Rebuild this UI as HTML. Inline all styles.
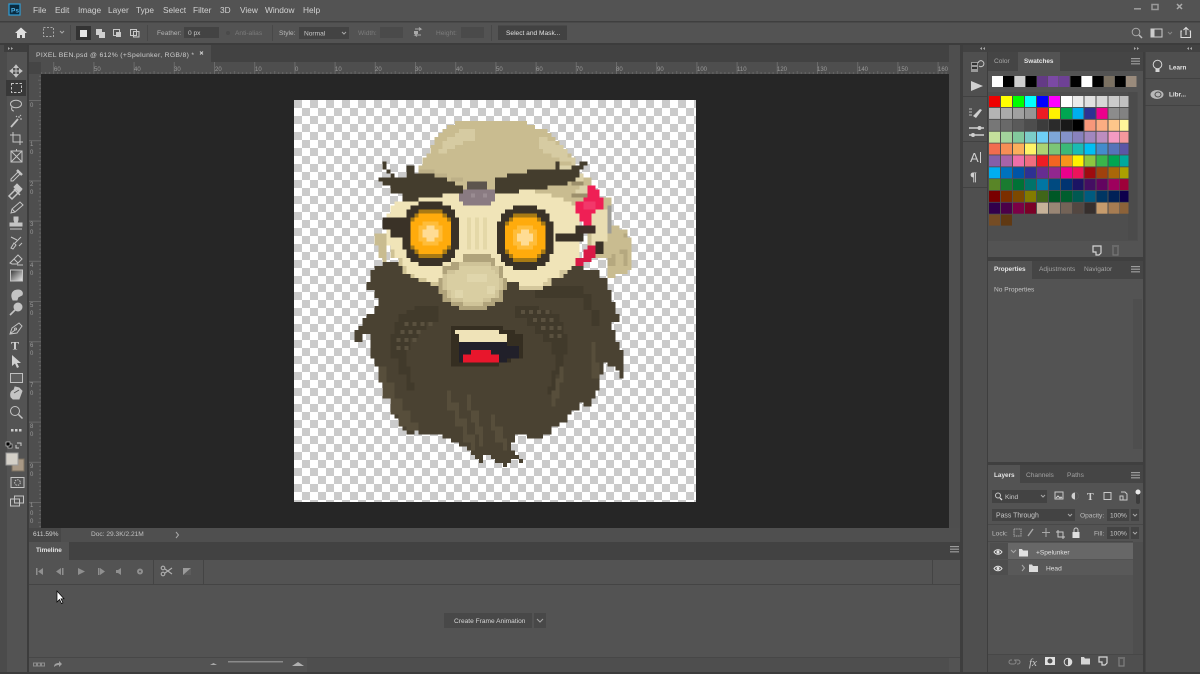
<!DOCTYPE html>
<html lang="en"><head><meta charset="utf-8"><title>Photoshop</title>
<style>html,body{margin:0;padding:0;background:#535353;width:1200px;height:674px;overflow:hidden}svg{display:block}text{font-family:"Liberation Sans",sans-serif;font-size:6.6px;fill:#c8c8c8}.m text{font-size:8.300px;fill:#d2d2d2}.d text{fill:#7c7c7c}.r text{font-size:6px;fill:#9a9a9a}.w{fill:#e4e4e4;font-weight:bold;font-size:6.400px}.i{fill:#c8c8c8}.s{fill:none;stroke:#c8c8c8;stroke-width:1}.g{fill:none;stroke:#a8a8a8;stroke-width:1}</style></head><body>
<svg width="1200" height="674" viewBox="0 0 1200 674" xmlns="http://www.w3.org/2000/svg">
<defs>
<pattern id="ck" width="16" height="16" patternUnits="userSpaceOnUse" x="294" y="100"><rect width="16" height="16" fill="#fff"/><rect width="8" height="8" fill="#cbcbcb"/><rect x="8" y="8" width="8" height="8" fill="#cbcbcb"/></pattern>
<pattern id="tx" width="40.2" height="12" patternUnits="userSpaceOnUse" x="13" y="62"><rect x="0" y="0" width="1" height="12" fill="#6a6a6a"/><rect x="4" y="10" width="1" height="2" fill="#666"/><rect x="8" y="10" width="1" height="2" fill="#666"/><rect x="12" y="10" width="1" height="2" fill="#666"/><rect x="16" y="10" width="1" height="2" fill="#666"/><rect x="20" y="9" width="1" height="3" fill="#666"/><rect x="24" y="10" width="1" height="2" fill="#666"/><rect x="28" y="10" width="1" height="2" fill="#666"/><rect x="32" y="10" width="1" height="2" fill="#666"/><rect x="36" y="10" width="1" height="2" fill="#666"/></pattern>
<pattern id="ty" width="12" height="40.2" patternUnits="userSpaceOnUse" x="29" y="100"><rect width="12" height="1" fill="#6a6a6a"/><rect x="10" y="4" width="2" height="1" fill="#666"/><rect x="10" y="8" width="2" height="1" fill="#666"/><rect x="10" y="12" width="2" height="1" fill="#666"/><rect x="10" y="16" width="2" height="1" fill="#666"/><rect x="9" y="20" width="3" height="1" fill="#666"/><rect x="10" y="24" width="2" height="1" fill="#666"/><rect x="10" y="28" width="2" height="1" fill="#666"/><rect x="10" y="32" width="2" height="1" fill="#666"/><rect x="10" y="36" width="2" height="1" fill="#666"/></pattern>
<linearGradient id="gr" x1="0" x2="1" y1="0" y2="1"><stop offset="0" stop-color="#333"/><stop offset="1" stop-color="#eee"/></linearGradient>
<g id="hb"><rect x="0" y="0" width="9" height="1.2" fill="#c0c0c0"/><rect x="0" y="2.6" width="9" height="1.2" fill="#c0c0c0"/><rect x="0" y="5.2" width="9" height="1.2" fill="#c0c0c0"/></g>
</defs>

<rect width="1200" height="674" fill="#535353"/>
<!-- menu -->
<rect x="0" y="21" width="1200" height="1.5" fill="#3f3f3f"/>
<rect x="0" y="43" width="1200" height="2" fill="#3c3c3c"/>
<rect x="9" y="4" width="11" height="11" fill="#0a2b40" stroke="#2f9fd8" stroke-width="1.2"/>
<text x="11" y="12.500" style="font-size:6.500px;font-weight:bold;fill:#4fb5ec">Ps</text>
<g class="m"><text x="33" y="13">File</text><text x="55" y="13">Edit</text><text x="78" y="13">Image</text><text x="108" y="13">Layer</text><text x="136" y="13">Type</text><text x="163" y="13">Select</text><text x="193" y="13">Filter</text><text x="220" y="13">3D</text><text x="240" y="13">View</text><text x="265" y="13">Window</text><text x="303" y="13">Help</text></g>
<rect x="1134" y="8" width="7" height="1.600" fill="#999"/><rect x="1152" y="4.500" width="6" height="5" fill="none" stroke="#999" stroke-width="1.500"/><path d="M1177 4l5 5M1182 4l-5 5" stroke="#aaa" stroke-width="1.500"/>

<!-- options bar -->
<path d="M15 33l6-5.500 6 5.500h-2v5h-3v-3h-2v3h-3v-5z" fill="#e0e0e0"/>
<rect x="43.500" y="27.500" width="10" height="9" class="g" stroke-dasharray="2 1.500"/>
<path d="M60 31l2 2 2-2" class="g"/>
<rect x="70" y="25" width="1" height="16" fill="#484848"/>
<rect x="76" y="26" width="15" height="14" fill="#333"/>
<rect x="80" y="30" width="7" height="7" fill="#e6e6e6"/>
<path d="M96 29h6v3h3v6h-6v-3h-3z" fill="#d0d0d0"/>
<rect x="113.500" y="29.500" width="6" height="6" class="s" /><rect x="116" y="32" width="5" height="5" class="i"/>
<rect x="130.500" y="29.500" width="6" height="6" class="s"/><rect x="133.500" y="31.500" width="5.500" height="5.500" class="s"/>
<rect x="147" y="25" width="1" height="16" fill="#484848"/>
<text x="157" y="35" style="fill:#b4b4b4">Feather:</text>
<rect x="184" y="27" width="35" height="11" fill="#434343"/><text x="188" y="35">0 px</text>
<circle cx="228" cy="33" r="2" fill="#4a4a4a"/><g class="d"><text x="235" y="35">Anti-alias</text></g>
<rect x="272" y="25" width="1" height="16" fill="#484848"/>
<text x="279" y="35" style="fill:#bbb">Style:</text>
<rect x="299" y="27" width="50" height="12" fill="#434343"/><text x="304" y="35.500">Normal</text><path d="M342 32l2 2 2-2" class="g"/>
<g class="d"><text x="358" y="35">Width:</text><text x="436" y="35">Height:</text></g>
<rect x="380" y="27" width="23" height="11" fill="#4a4a4a"/><rect x="461" y="27" width="23" height="11" fill="#4a4a4a"/>
<path d="M415 29h6l-2-1.500M421 29l-2 1.500M421 35h-6l2-1.500M415 35l2 1.500" stroke="#aaa" fill="none"/><rect x="414" y="31" width="4" height="3" fill="#aaa"/>
<rect x="491" y="25" width="1" height="16" fill="#484848"/>
<rect x="498" y="25.500" width="69" height="14.500" fill="#424242"/><text x="506" y="35" style="fill:#e0e0e0">Select and Mask...</text>
<circle cx="1136" cy="32" r="3.800" class="g" stroke-width="1.300"/><path d="M1139 35l3 3" stroke="#bbb" stroke-width="1.500"/>
<rect x="1151" y="29" width="11" height="8" fill="none" stroke="#ccc"/><rect x="1151" y="29" width="3.500" height="8" fill="#ccc"/>
<path d="M1168 32l2 2 2-2" stroke="#888" fill="none"/>
<path d="M1182 31h-1v6.500h9.500V31h-1M1186 35v-7M1183.500 30l2.500-2.500 2.500 2.500" fill="none" stroke="#ddd" stroke-width="1.100"/>

<!-- left dock -->
<rect x="0" y="45" width="7" height="629" fill="#4b4b4b"/>
<rect x="4" y="45" width="24" height="7" fill="#3e3e3e"/>
<path d="M8 47l2 1.500-2 1.500zM11 47l2 1.500-2 1.500z" fill="#aaa"/>
<rect x="27" y="45" width="2" height="629" fill="#3c3c3c"/>

<!-- tab bar -->
<rect x="29" y="45" width="931" height="17" fill="#424242"/>
<rect x="29" y="45" width="182" height="17" fill="#4e4e4e"/>
<text x="36" y="57" textLength="158" style="fill:#cfcfcf;font-size:6.800px">PIXEL BEN.psd @ 612% (+Spelunker, RGB/8) *</text>
<path d="M200 51.500l3 3M203 51.500l-3 3" stroke="#ccc"/>

<!-- rulers -->
<rect x="29" y="62" width="920" height="12" fill="#4e4e4e"/><rect x="41" y="62" width="908" height="12" fill="url(#tx)"/>
<rect x="29" y="62" width="12" height="466" fill="#4e4e4e"/><rect x="29" y="74" width="12" height="454" fill="url(#ty)"/>
<rect x="29" y="62" width="12" height="12" fill="#454545"/>
<g class="r"><text x="54" y="71">60</text><text x="94" y="71">50</text><text x="134" y="71">40</text><text x="174" y="71">30</text><text x="215" y="71">20</text><text x="255" y="71">10</text><text x="295" y="71">0</text><text x="335" y="71">10</text><text x="375" y="71">20</text><text x="415" y="71">30</text><text x="456" y="71">40</text><text x="496" y="71">50</text><text x="536" y="71">60</text><text x="576" y="71">70</text><text x="616" y="71">80</text><text x="657" y="71">90</text><text x="697" y="71">100</text><text x="737" y="71">110</text><text x="777" y="71">120</text><text x="817" y="71">130</text><text x="858" y="71">140</text><text x="898" y="71">150</text><text x="938" y="71">160</text>
<text x="30" y="107">0</text><text x="30" y="146">1</text><text x="30" y="154">0</text><text x="30" y="186">2</text><text x="30" y="194">0</text><text x="30" y="226">3</text><text x="30" y="234">0</text><text x="30" y="267">4</text><text x="30" y="275">0</text><text x="30" y="307">5</text><text x="30" y="315">0</text><text x="30" y="347">6</text><text x="30" y="355">0</text><text x="30" y="387">7</text><text x="30" y="395">0</text><text x="30" y="428">8</text><text x="30" y="436">0</text><text x="30" y="468">9</text><text x="30" y="476">0</text><text x="30" y="507">1</text><text x="30" y="515">0</text><text x="30" y="523">0</text></g>

<!-- canvas -->
<rect x="41" y="74" width="908" height="454" fill="#262626"/>
<rect x="294" y="100" width="402" height="402" fill="url(#ck)"/>

<!-- pixel art -->
<g transform="translate(294 101) scale(4.02)" shape-rendering="crispEdges">
<!-- ears/back -->
<path d="M78 31H81V32H83V34H84V42H83V43H80V44H78Z" fill="#c9bc90"/><path d="M82 33h1v1h-1zM81 37h2v4h-1v-3h-1zM78 38h2v3h-2z" fill="#b5a87f"/>
<path d="M20 33H23V40H22V39H21V36H20Z" fill="#c9bc90"/>
<rect x="73" y="24" width="6" height="15" fill="#c9bc90"/><path d="M78 26h1v7h-1z" fill="#9e9d96"/><path d="M74 27h4v8h-2v2h-2z" fill="#e9ddb2"/>
<!-- beard -->
<path d="M22 40H72V42H76V44H78V47H79V50H80V53H81V55H79V57H80V60H81V62H82V69H81V67H80V66H78V65H77V68H76V72H75V74H74V76H72V75H71V77H69V78H68V80H66V81H64V83H62V84H58V83H55V85H54V87H55V88H56V89H57V90H56V89H54V90H53V91H52V90H50V89H49V88H47V90H46V89H45V88H44V87H43V86H41V85H39V84H37V83H31V82H30V83H28V82H27V81H26V79H25V77H24V74H23V72H22V69H21V66H20V64H19V58H17V60H15V57H16V56H17V54H18V53H20V51H21V49H20V47H18V45H19V42H20V41H22Z" fill="#4a4232"/>
<!-- moustache shading -->
<path d="M36 51H30V52H28V53H26V55H25V58H24V64H26V68H28V72H30V70H29V66H28V62H29V59H31V57H33V55H36V53Z" fill="#413a2b"/>
<path d="M55 51H61V52H64V53H66V55H67V58H68V63H67V68H65V73H63V71H64V67H65V63H64V60H62V58H60V56H58V54H55Z" fill="#413a2b"/>
<path d="M60 46H72V48H74V52H76V56H74V52H72V49H60Z" fill="#413a2b"/>
<g fill="none" stroke="#5a513f" stroke-width="1" stroke-dasharray="1 1">
<path d="M27.500 55.500H35.500M26.500 57.500H32.500M25.500 59.500H30.500M25.500 61.500H28.500"/>
<path d="M56.500 52.500H63.500M59.500 54.500H65.500M61.500 56.500H66.500M63.500 58.500H67.500"/>
</g>
<g fill="#574e3b">
<path d="M21 66H23V70H25V74H27V77H29V80H31V82H28V81H26V78H24V74H22V70H21Z"/>
<path d="M38 72H39V75H41V79H43V83H45V87H44V85H42V81H40V77H38Z"/>
<path d="M43 73H44V77H46V81H47V86H46V83H45V80H44V77H43Z"/>
<path d="M49 78H50V81H52V84H53V87H52V85H50V82H49Z"/>
<path d="M66 66H67V70H66V74H65V76H64V72H65V69H66Z"/>
<path d="M74 60H75V65H76V69H74V64H74Z"/>
</g>
<!-- skull -->
<path d="M44 5H58V6H60V7H63V8H64V9H65V10H66V11H67V12H68V13H69V14H70V16H71V18H72V19H74V22H75V25H73V26H30V18H31V16H32V14H33V13H34V11H35V9H36V8H37V7H38V6H40V5Z" fill="#c9bc90"/>
<path d="M41 7H45V10H42V11H40V12H38V13H36V12H37V10H38V9H40V8H41Z" fill="#d6cba2"/>
<path d="M61 9H63V10H65V11H67V12H68V14H70V16H69V15H66V14H64V13H62V12H61Z" fill="#d6cba2"/>
<path d="M31 17H35V18H38V19H42V20H45V22H43V20H39V19H33V18H31Z" fill="#bdb087"/>
<path d="M66 16h5v2h1v3h-3v-1h-1v-2h-2zM71 21h2v2h-3v-1h1z" fill="#dcd2aa"/>
<path d="M69 20h3v1h-3zM69 23h4v1h-4z" fill="#9c8f6b"/>
<!-- face -->
<path d="M38 22H41V25H50V22H60V23H64V24H67V25H69V26H70V28H71V40H70V41H69V42H67V44H64V46H62V47H56V45H36V46H34V45H31V44H29V43H27V41H26V39H24V36H23V28H24V26H25V25H27V24H30V23H33V22Z" fill="#f0e4b8"/>
<path d="M23 36h1v3h2v2h1v2h2v1h2v1h3v1h2v-1h-3v-1h-3v-1h-2v-2h-1v-2h-2v-2h-1v-1h-1z" fill="#cfc294"/>
<path d="M56 46h6v-1h1v-1h3v-2h2v1h-1v1h-3v2h-2v1h-6z" fill="#d4c79c"/>
<path d="M43 29h1v8h-1zM45 29h1v8h-1zM47 29h1v8h-1z" fill="#e4d8a8"/>
<!-- brows -->
<path d="M22 15H23V17H24V18H25V19H28V16H30V18H35V19H38V20H40V21H42V22H44V23H37V24H31V25H27V23H24V21H22V20H21V19H24V18H23V17H22Z" fill="#443d2d"/>
<path d="M71 15H73V16H72V17H71V19H70V20H68V21H63V22H56V23H50V19H53V18H58V17H65V15H66V17H69V16H71Z" fill="#443d2d"/>
<!-- nose top -->
<rect x="43" y="20" width="5" height="2" fill="#5c544d"/>
<path d="M42 22H50V25H49V26H42V25H41V23H42Z" fill="#8a7b82"/><path d="M44 23h1v1h-1zM47 23h1v1h-1z" fill="#9a8c92"/>
<!-- straps -->
<rect x="22" y="29" width="5" height="3" fill="#3a3227"/><rect x="24" y="32" width="3" height="2" fill="#3a3227"/><rect x="65" y="33" width="7" height="2" fill="#3a3227"/><rect x="70" y="31" width="2" height="3" fill="#3a3227"/>
<!-- goggles -->
<g id="gog">
<path d="M31 25H37V26H39V27H40V29H41V37H40V39H39V40H37V41H31V40H29V39H28V37H27V29H28V27H29V26H31Z" fill="#3a3227"/>
<path d="M31 27H37V28H38V29H39V37H38V38H37V39H31V38H30V37H29V29H30V28H31Z" fill="#a87a14"/>
<path d="M31 28H37V29H38V30H39V36H38V37H37V38H31V37H30V36H29V30H30V29H31Z" fill="#ffab0c"/>
<path d="M32 30H36V31H37V35H36V36H32V35H31V31H32Z" fill="#ffbd3a"/>
<path d="M33 31H35V32H36V34H35V35H33V34H32V32H33Z" fill="#ffdc94"/>
</g>
<use href="#gog" transform="translate(23.5 1)"/>
<!-- pink -->
<path d="M73 21H75V22H76V24H77V27H75V28H74V31H72V30H71V28H70V25H72V24H73Z" fill="#ef1f55"/>
<path d="M72 31H75V33H71V32H72Z" fill="#40302a"/><path d="M72 25h3v2h-3z" fill="#f2386a"/>
<path d="M75 35H76V37H75V39H74V40H72V41H70V39H72V37H73V36H75Z" fill="#d91946"/>
<rect x="75" y="35" width="2" height="3" fill="#3a3227"/>
<!-- respirator -->
<path d="M42 38H49V39H50V41H52V44H53V47H52V50H50V51H48V52H41V51H39V50H37V48H36V44H37V41H39V40H42Z" fill="#b0a37b"/>
<path d="M41 40H49V41H51V44H52V47H51V49H49V50H47V51H42V50H39V49H38V47H37V43H38V42H41Z" fill="#cfc398"/>
<path d="M41 41H49V42H50V43H51V47H50V49H47V50H42V49H39V47H38V43H40V42H41Z" fill="#d9cea2"/>
<path d="M43 43h5v2h-5zM40 47h2v2h-2zM48 46h2v2h-2z" fill="#e0d6ac"/>
<!-- mouth -->
<path d="M39 56H52V57H55V58H57V64H54V65H51V66H39Z" fill="#352e21"/>
<path d="M41 60H53V61H56V64H53V65H41Z" fill="#21202a"/>
<path d="M40 57H51V58H53V60H41V58H40Z" fill="#efe3b8"/>
<path d="M44 62H49V63H51V65H42V63H44Z" fill="#e8162c"/>
</g>

<!-- status bar -->
<rect x="29" y="528" width="931" height="14" fill="#4f4f4f"/>
<rect x="29" y="528" width="32" height="14" fill="#474747"/>
<text x="33" y="536" style="fill:#d0d0d0">611.59%</text><text x="91" y="536" style="fill:#c0c0c0">Doc: 29.3K/2.21M</text>
<path d="M176 532l2.500 3-2.500 3" class="g"/>

<!-- timeline -->
<rect x="29" y="542" width="931" height="18" fill="#424242"/>
<rect x="29" y="542" width="40" height="18" fill="#535353"/>
<text x="36" y="552" class="w">Timeline</text>
<use href="#hb" x="950" y="546" opacity=".7"/>
<rect x="29" y="584" width="931" height="1" fill="#444"/>
<rect x="153" y="560" width="1" height="24" fill="#444"/><rect x="203" y="560" width="1" height="24" fill="#444"/><rect x="932" y="560" width="1" height="24" fill="#444"/>
<g fill="#8f8f8f"><path d="M36 568h1.500v7H36zM43 568v7l-5-3.500z"/><path d="M62 568h1.500v7H62zM61 568v7l-5-3.500z"/><path d="M78 568l7 3.500-7 3.500z"/><path d="M98 568h1.500v7H98zM100 568v7l5-3.500z"/><path d="M121 568v7l-3-2h-2v-3h2z"/><circle cx="140" cy="571.500" r="3"/></g>
<circle cx="140" cy="571.500" r="1" fill="#535353"/>
<g fill="none" stroke="#b0b0b0" stroke-width="1.100"><circle cx="163" cy="568" r="1.800"/><circle cx="163" cy="574" r="1.800"/><path d="M165 569l7 5M165 573l7-5"/></g>
<rect x="183" y="568" width="8" height="7" fill="#9a9a9a"/><path d="M183 575l8-7v7z" fill="#5c5c5c"/>
<rect x="29" y="657" width="931" height="1" fill="#474747"/>
<rect x="307" y="658" width="642" height="14" fill="#4e4e4e"/>
<g fill="none" stroke="#8c8c8c"><rect x="33.500" y="663" width="3" height="3"/><rect x="37.500" y="663" width="3" height="3"/><rect x="41.500" y="663" width="3" height="3"/></g>
<path d="M54 667c0-3 2-4 5-4v-2l3 3-3 3v-2c-2 0-4 1-5 2z" fill="#a0a0a0"/>
<path d="M210 665l3.500-2 3.500 2z" fill="#a8a8a8"/><rect x="228" y="661" width="55" height="1.500" fill="#8a8a8a"/><path d="M292 666l6-4 6 4z" fill="#b0b0b0"/>
<rect x="444" y="613" width="88" height="15" fill="#484848"/><text x="454" y="623" style="fill:#d6d6d6">Create Frame Animation</text>
<rect x="534" y="613" width="12" height="15" fill="#484848"/><path d="M537 619l3 3 3-3" class="g"/>
<path d="M57 591v11l2.500-2.500 2 4 1.500-.7-2-4H64z" fill="#fff" stroke="#000" stroke-width=".7"/>

<!-- tools -->
<rect x="6" y="80" width="20" height="16" fill="#383838"/>
<g fill="none" stroke="#c4c4c4" stroke-width="1">
<path d="M16 66v10M11 71h10"/><path d="M14 67.500l2-2.500 2 2.500zM14 74.500l2 2.500 2-2.500zM12.500 69l-2.500 2 2.500 2zM19.500 69l2.500 2-2.500 2z" fill="#c4c4c4"/>
<rect x="11.500" y="83.500" width="10" height="9" stroke-dasharray="2.500 1.500"/>
<ellipse cx="16" cy="104" rx="5.500" ry="3.800"/><path d="M12 107c-1 2 0 4 2 4"/>
<path d="M11 127l7-8" stroke-width="1.800"/><path d="M19 116v2M22 119h-2M21 115l-1 1M16 116l1 1"/>
<path d="M13 132v10h10M10 135h10v10"/>
<rect x="11" y="151" width="11" height="11"/><path d="M11 151l11 11M22 151l-11 11M16.500 149v2"/>
<path d="M11 179l7-7 2 2-7 7h-2z"/><path d="M17 170l5 5" stroke-width="2.400"/>
<path d="M11 198l-2-2 9-9 3 3-9 9zM14 189l6 6" stroke-width="1.500"/><path d="M17 184l5 5-3 3-5-5z" fill="#c4c4c4"/>
<path d="M11 213l1-4 8-7 3 3-8 7zM12 209l3 3"/>
<path d="M14 217h4v3l-1 3h5v3H10v-3h5l-1-3zM10 229h12" fill="#c4c4c4"/>
<path d="M11 248l3-5 2 2-3 4zM15 243l6-6M11 237l6 3M19 246l3-3"/>
<path d="M10 263l8-8 4 4-5 5h-5zM14 259l4 4" /><path d="M17 265h6"/>
<rect x="10.500" y="270" width="12" height="11" fill="url(#gr)"/>
<path d="M13 300c-3-6 0-10 5-10 4 0 5 3 4 5l-4 2-1 3z" fill="#c4c4c4"/>
<circle cx="18" cy="307" r="4" fill="#c4c4c4"/><path d="M15 310l-5 5" stroke-width="1.600"/>
<path d="M10 334l2-6 7-5 3 3-5 7zM10 334l5-4" /><circle cx="15.500" cy="329" r="1"/>
<rect x="10.500" y="373.500" width="12" height="9" stroke="#c0c0c0" fill="#5e5e5e"/>
<path d="M11 397c-1-4 0-6 3-7l1-3 4 1 3 3-3 8h-6z" fill="#c4c4c4"/><path d="M14 393l5-3" stroke="#535353"/>
<circle cx="15" cy="411" r="4.500"/><path d="M18.500 414.500l4 4" stroke-width="1.500"/>
<rect x="11" y="477.500" width="13" height="10"/><circle cx="17.500" cy="482.500" r="2.800" stroke-dasharray="1.500 1"/>
<rect x="14.500" y="496" width="9" height="7"/><rect x="10.500" y="499" width="9" height="7"/>
</g>
<text x="11" y="349.500" style="font:bold 12px 'Liberation Serif',serif;fill:#d4d4d4">T</text>
<path d="M12 355l0 11 3-2.500 2 4.500 2-1-2-4h4z" fill="#d0d0d0"/>
<rect x="11" y="429" width="2.500" height="2.500" fill="#ccc"/><rect x="15" y="429" width="2.500" height="2.500" fill="#ccc"/><rect x="19" y="429" width="2.500" height="2.500" fill="#ccc"/>
<rect x="8" y="444" width="4" height="4" fill="#000" stroke="#ddd" stroke-width=".6"/><rect x="6" y="442" width="4" height="4" fill="#000" stroke="#ddd" stroke-width=".6"/>
<path d="M17 443h4v3M19 448h-3v-3" stroke="#ccc" fill="none"/>
<rect x="12" y="459" width="12" height="12" fill="#a89885" stroke="#7a6f60"/>
<rect x="6" y="453" width="12" height="12" fill="#d4d0c8" stroke="#9a9a9a"/>

<!-- right dock -->
<rect x="949" y="45" width="11" height="483" fill="#4e4e4e"/>
<rect x="960" y="45" width="3" height="629" fill="#3e3e3e"/>
<rect x="963" y="45" width="24" height="629" fill="#4f4f4f"/>
<rect x="987" y="45" width="1" height="629" fill="#3e3e3e"/>
<rect x="963" y="45" width="237" height="7" fill="#424242"/>
<path d="M985 47l-2 1.500 2 1.500zM982 47l-2 1.500 2 1.500zM1134 47l2 1.500-2 1.500zM1137 47l2 1.500-2 1.500zM1192 47l-2 1.500 2 1.500zM1189 47l-2 1.500 2 1.500z" fill="#aaa"/>
<rect x="963" y="96" width="24" height="1" fill="#414141"/><rect x="963" y="141" width="24" height="1" fill="#414141"/><rect x="963" y="187" width="24" height="1" fill="#414141"/>
<rect x="971" y="62" width="7" height="10" fill="#9a9a9a"/><rect x="972" y="63" width="5" height="2" fill="#333"/><rect x="972" y="67" width="5" height="2" fill="#333"/>
<path d="M979 66a3 3 0 1 0-1-3" class="s"/>
<path d="M971 81l12 5-12 5z" fill="#d0d0d0"/>
<path d="M969 109h3M969 112h3M969 115h3" stroke="#bbb"/><path d="M973 116l7-7 2 1-6 8z" fill="#d0d0d0"/>
<path d="M969 128h9M981 128h3M969 135h3M975 135h9" stroke="#d0d0d0" stroke-width="1.400"/><circle cx="979.500" cy="128" r="2" fill="#d0d0d0"/><circle cx="973" cy="135" r="2" fill="#d0d0d0"/>
<text x="970" y="162" style="font-size:13px;fill:#d0d0d0">A</text><rect x="980" y="152" width="1" height="11" fill="#d0d0d0"/>
<text x="970" y="181" style="font:bold 13px 'Liberation Serif',serif;fill:#d0d0d0">¶</text>

<!-- color/swatches panel -->
<rect x="988" y="52" width="155" height="205" fill="#535353"/>
<rect x="988" y="52" width="155" height="19" fill="#454545"/>
<rect x="1018" y="52" width="42" height="19" fill="#535353"/>
<text x="994" y="63" style="fill:#a6a6a6">Color</text><text x="1024" y="63" class="w">Swatches</text>
<use href="#hb" x="1131" y="58" opacity=".7"/>
<g id="rec">
<rect x="992" y="76" width="11" height="11" fill="#fff"/><rect x="1003" y="76" width="11" height="11" fill="#000"/><rect x="1014.500" y="76" width="10.500" height="11" fill="#cfcfcf"/><rect x="1026" y="76" width="10.500" height="11" fill="#000"/><rect x="1037" y="76" width="10.500" height="11" fill="#643a86"/><rect x="1048" y="76" width="10.500" height="11" fill="#7b49a4"/><rect x="1059" y="76" width="10.500" height="11" fill="#6e4195"/><rect x="1070.500" y="76" width="10.500" height="11" fill="#000"/><rect x="1081.500" y="76" width="10.500" height="11" fill="#fff"/><rect x="1093" y="76" width="10.500" height="11" fill="#000"/><rect x="1104" y="76" width="10.500" height="11" fill="#7b7162"/><rect x="1115" y="76" width="10.500" height="11" fill="#000"/><rect x="1126" y="76" width="10.500" height="11" fill="#9a8b7c"/>
</g>
<rect x="988" y="92" width="150" height="149" fill="#4e4e4e"/>
<rect x="1128" y="92" width="9" height="148" fill="#4b4b4b"/>
<g transform="translate(989 96)">
<g><rect x="0" width="11" height="11" fill="#ee0000"/><rect x="12" width="11" height="11" fill="#ffff00"/><rect x="24" width="11" height="11" fill="#00ff00"/><rect x="36" width="11" height="11" fill="#00ffff"/><rect x="48" width="11" height="11" fill="#0000ff"/><rect x="60" width="11" height="11" fill="#ff00ff"/><rect x="72" width="11" height="11" fill="#ffffff"/><rect x="83.500" width="11" height="11" fill="#ebebeb"/><rect x="95.500" width="11" height="11" fill="#e1e1e1"/><rect x="107.500" width="11" height="11" fill="#d7d7d7"/><rect x="119.500" width="11" height="11" fill="#cbcbcb"/><rect x="131" width="8.500" height="11" fill="#c0c0c0"/></g>
<g transform="translate(0 11.900)"><rect x="0" width="11" height="11" fill="#b4b4b4"/><rect x="12" width="11" height="11" fill="#aaaaaa"/><rect x="24" width="11" height="11" fill="#a0a0a0"/><rect x="36" width="11" height="11" fill="#969696"/><rect x="48" width="11" height="11" fill="#ed1c24"/><rect x="60" width="11" height="11" fill="#fff200"/><rect x="72" width="11" height="11" fill="#00a651"/><rect x="83.500" width="11" height="11" fill="#00aeef"/><rect x="95.500" width="11" height="11" fill="#2e3192"/><rect x="107.500" width="11" height="11" fill="#ec008c"/><rect x="119.500" width="11" height="11" fill="#8c8c8c"/><rect x="131" width="8.500" height="11" fill="#828282"/></g>
<g transform="translate(0 23.800)"><rect x="0" width="11" height="11" fill="#777777"/><rect x="12" width="11" height="11" fill="#696969"/><rect x="24" width="11" height="11" fill="#5a5a5a"/><rect x="36" width="11" height="11" fill="#4d4d4d"/><rect x="48" width="11" height="11" fill="#3c3c3c"/><rect x="60" width="11" height="11" fill="#2b2b2b"/><rect x="72" width="11" height="11" fill="#191919"/><rect x="83.500" width="11" height="11" fill="#000000"/><rect x="95.500" width="11" height="11" fill="#f7977a"/><rect x="107.500" width="11" height="11" fill="#fbad82"/><rect x="119.500" width="11" height="11" fill="#fdc68a"/><rect x="131" width="8.500" height="11" fill="#fff79a"/></g>
<g transform="translate(0 35.700)"><rect x="0" width="11" height="11" fill="#c4df9b"/><rect x="12" width="11" height="11" fill="#a2d39c"/><rect x="24" width="11" height="11" fill="#82ca9d"/><rect x="36" width="11" height="11" fill="#7bcdc8"/><rect x="48" width="11" height="11" fill="#6ecff6"/><rect x="60" width="11" height="11" fill="#7ea7d8"/><rect x="72" width="11" height="11" fill="#8493ca"/><rect x="83.500" width="11" height="11" fill="#8882be"/><rect x="95.500" width="11" height="11" fill="#a187be"/><rect x="107.500" width="11" height="11" fill="#bc8dbf"/><rect x="119.500" width="11" height="11" fill="#f49ac2"/><rect x="131" width="8.500" height="11" fill="#f6989d"/></g>
<g transform="translate(0 47.500)"><rect x="0" width="11" height="11" fill="#f26c4f"/><rect x="12" width="11" height="11" fill="#f68e55"/><rect x="24" width="11" height="11" fill="#fbaf5c"/><rect x="36" width="11" height="11" fill="#fff467"/><rect x="48" width="11" height="11" fill="#acd372"/><rect x="60" width="11" height="11" fill="#7cc576"/><rect x="72" width="11" height="11" fill="#3bb878"/><rect x="83.500" width="11" height="11" fill="#1abbb4"/><rect x="95.500" width="11" height="11" fill="#00bff3"/><rect x="107.500" width="11" height="11" fill="#438ccb"/><rect x="119.500" width="11" height="11" fill="#5574b9"/><rect x="131" width="8.500" height="11" fill="#5c56a6"/></g>
<g transform="translate(0 59.400)"><rect x="0" width="11" height="11" fill="#855fa8"/><rect x="12" width="11" height="11" fill="#a763a8"/><rect x="24" width="11" height="11" fill="#ee6fa9"/><rect x="36" width="11" height="11" fill="#f06d7f"/><rect x="48" width="11" height="11" fill="#ed1c24"/><rect x="60" width="11" height="11" fill="#f26522"/><rect x="72" width="11" height="11" fill="#f7941d"/><rect x="83.500" width="11" height="11" fill="#fff200"/><rect x="95.500" width="11" height="11" fill="#8dc63f"/><rect x="107.500" width="11" height="11" fill="#39b54a"/><rect x="119.500" width="11" height="11" fill="#00a651"/><rect x="131" width="8.500" height="11" fill="#00a99d"/></g>
<g transform="translate(0 71.300)"><rect x="0" width="11" height="11" fill="#00aeef"/><rect x="12" width="11" height="11" fill="#0072bc"/><rect x="24" width="11" height="11" fill="#0054a5"/><rect x="36" width="11" height="11" fill="#2e3192"/><rect x="48" width="11" height="11" fill="#662d91"/><rect x="60" width="11" height="11" fill="#92278f"/><rect x="72" width="11" height="11" fill="#ec008c"/><rect x="83.500" width="11" height="11" fill="#ed145b"/><rect x="95.500" width="11" height="11" fill="#9e0b0f"/><rect x="107.500" width="11" height="11" fill="#a0410d"/><rect x="119.500" width="11" height="11" fill="#aa6708"/><rect x="131" width="8.500" height="11" fill="#aba000"/></g>
<g transform="translate(0 83.100)"><rect x="0" width="11" height="11" fill="#598527"/><rect x="12" width="11" height="11" fill="#1a7b30"/><rect x="24" width="11" height="11" fill="#007236"/><rect x="36" width="11" height="11" fill="#00736a"/><rect x="48" width="11" height="11" fill="#0076a3"/><rect x="60" width="11" height="11" fill="#004a80"/><rect x="72" width="11" height="11" fill="#003471"/><rect x="83.500" width="11" height="11" fill="#1b1464"/><rect x="95.500" width="11" height="11" fill="#440e62"/><rect x="107.500" width="11" height="11" fill="#630460"/><rect x="119.500" width="11" height="11" fill="#9e005d"/><rect x="131" width="8.500" height="11" fill="#9e0039"/></g>
<g transform="translate(0 94.900)"><rect x="0" width="11" height="11" fill="#790000"/><rect x="12" width="11" height="11" fill="#7b2e00"/><rect x="24" width="11" height="11" fill="#7d4900"/><rect x="36" width="11" height="11" fill="#827b00"/><rect x="48" width="11" height="11" fill="#406618"/><rect x="60" width="11" height="11" fill="#005826"/><rect x="72" width="11" height="11" fill="#005e2e"/><rect x="83.500" width="11" height="11" fill="#005952"/><rect x="95.500" width="11" height="11" fill="#005b7f"/><rect x="107.500" width="11" height="11" fill="#003663"/><rect x="119.500" width="11" height="11" fill="#002157"/><rect x="131" width="8.500" height="11" fill="#0d004c"/></g>
<g transform="translate(0 106.700)"><rect x="0" width="11" height="11" fill="#32004b"/><rect x="12" width="11" height="11" fill="#4b0049"/><rect x="24" width="11" height="11" fill="#7b0046"/><rect x="36" width="11" height="11" fill="#7a0026"/><rect x="48" width="11" height="11" fill="#c7b299"/><rect x="60" width="11" height="11" fill="#998675"/><rect x="72" width="11" height="11" fill="#736357"/><rect x="83.500" width="11" height="11" fill="#534741"/><rect x="95.500" width="11" height="11" fill="#362f2d"/><rect x="107.500" width="11" height="11" fill="#c69c6d"/><rect x="119.500" width="11" height="11" fill="#a67c52"/><rect x="131" width="8.500" height="11" fill="#8c6239"/></g>
<g transform="translate(0 118.600)"><rect x="0" width="11" height="11" fill="#754c24"/><rect x="12" width="11" height="11" fill="#603913"/></g>
</g>
<path d="M1093 246h8v7l-2 2h-3v-3h-3z" fill="none" stroke="#d4d4d4" stroke-width="1.200"/>
<path d="M1112 246h7M1113 247v8h5v-8" fill="none" stroke="#777" stroke-width="1.200"/>

<!-- properties -->
<rect x="988" y="257" width="155" height="4" fill="#3f3f3f"/>
<rect x="988" y="261" width="155" height="18" fill="#454545"/>
<rect x="988" y="261" width="44" height="18" fill="#535353"/>
<text x="994" y="271" class="w">Properties</text><text x="1039" y="271" style="fill:#a2a2a2">Adjustments</text><text x="1084" y="271" style="fill:#a2a2a2">Navigator</text>
<use href="#hb" x="1131" y="266" opacity=".7"/>
<rect x="988" y="279" width="155" height="183" fill="#535353"/>
<rect x="1133" y="299" width="9" height="150" fill="#4e4e4e"/>
<text x="994" y="291.500" style="fill:#c4c4c4">No Properties</text>
<rect x="988" y="462" width="155" height="3" fill="#3f3f3f"/>

<!-- layers -->
<rect x="988" y="465" width="155" height="18" fill="#454545"/>
<rect x="988" y="465" width="32" height="18" fill="#535353"/>
<text x="994" y="477" class="w">Layers</text><text x="1026" y="477" style="fill:#a2a2a2">Channels</text><text x="1067" y="477" style="fill:#a2a2a2">Paths</text>
<use href="#hb" x="1131" y="472" opacity=".7"/>
<rect x="988" y="483" width="155" height="189" fill="#535353"/>
<rect x="992" y="490" width="55" height="13" fill="#434343"/>
<circle cx="998" cy="495.500" r="2.500" class="s"/><path d="M1000 498l2 2" stroke="#ddd" stroke-width="1.300"/>
<text x="1005" y="499">Kind</text><path d="M1041 495l2 2 2-2" class="g"/>
<rect x="1055" y="492" width="8" height="7" class="s" stroke="#ccc"/><path d="M1056 498l2-2 2 2 1-1 1 1" stroke="#ccc" fill="none"/>
<circle cx="1075" cy="496" r="3.500" fill="#d0d0d0"/><path d="M1075 492.500v7a3.500 3.500 0 0 0 0-7z" fill="#535353"/>
<text x="1087" y="500" style="font:bold 10px 'Liberation Serif',serif;fill:#d0d0d0">T</text>
<rect x="1104" y="492.500" width="7" height="7" class="s" stroke-width="1"/><path d="M1121 492h4l2 2v6h-7v-4h3v4" class="s" stroke-width="1"/>
<rect x="1136" y="492" width="4" height="12" rx="2" fill="#3c3c3c"/><circle cx="1138" cy="492" r="2.500" fill="#e8e8e8"/>
<rect x="992" y="509" width="83" height="12" fill="#434343"/><text x="996" y="517.500" style="font-size:6.900px">Pass Through</text><path d="M1068 514l2 2 2-2" class="g"/>
<text x="1080" y="517.500" style="fill:#bdbdbd">Opacity:</text><rect x="1107" y="509" width="22" height="12" fill="#434343"/><text x="1110" y="517.500">100%</text>
<rect x="1131" y="509" width="8" height="12" fill="#434343"/><path d="M1133 514l2 2 2-2" class="g"/>
<rect x="988" y="524" width="155" height="1" fill="#484848"/>
<text x="992" y="535.500" style="fill:#bdbdbd">Lock:</text>
<rect x="1014" y="529" width="7" height="7" class="g" stroke-dasharray="1.500 .7"/>
<path d="M1028 536l5-7" stroke="#a8a8a8" stroke-width="1.400"/>
<path d="M1046 528v9M1042 532.500h8" class="g"/>
<path d="M1058 530v7h7M1056 532h7v7" class="s" stroke-width="1"/>
<rect x="1072.500" y="532" width="7" height="6" fill="#e0e0e0"/><path d="M1074 532v-2a2 2 0 0 1 4 0v2" class="s"/>
<text x="1094" y="535.500" style="fill:#bdbdbd">Fill:</text><rect x="1107" y="527" width="22" height="12" fill="#434343"/><text x="1110" y="535.500">100%</text>
<rect x="1131" y="527" width="8" height="12" fill="#434343"/><path d="M1133 532l2 2 2-2" class="g"/>
<rect x="988" y="541" width="145" height="1" fill="#484848"/>
<rect x="1133" y="542" width="10" height="113" fill="#4e4e4e"/>
<rect x="1008" y="543" width="125" height="16" fill="#676767"/>
<rect x="990" y="543" width="18" height="16" fill="#4e4e4e"/><rect x="990" y="560" width="18" height="15" fill="#4e4e4e"/>
<rect x="1008" y="560" width="125" height="15" fill="#595959"/>
<g fill="none" stroke="#e6e6e6"><path d="M994 552c2-3 6-3 8 0-2 3-6 3-8 0z"/><path d="M994 568.500c2-3 6-3 8 0-2 3-6 3-8 0z"/></g><circle cx="998" cy="552" r="1.500" fill="#e6e6e6"/><circle cx="998" cy="568.500" r="1.500" fill="#e6e6e6"/>
<path d="M1011 550l2.500 2.500 2.500-2.500" class="g"/>
<path d="M1019 549h3l1 1.500h5v6h-9z" fill="#e0e0e0"/>
<text x="1036" y="554.500" style="fill:#e0e0e0">+Spelunker</text>
<path d="M1022 565l2.500 3-2.500 3" class="g"/>
<path d="M1029 564.500h3l1 1.500h5v6h-9z" fill="#dcdcdc"/>
<text x="1046" y="570.500" style="fill:#e0e0e0">Head</text>
<rect x="988" y="654" width="155" height="1" fill="#474747"/>
<rect x="988" y="655" width="155" height="17" fill="#4f4f4f"/>
<path d="M1013 662h-1a2 2 0 0 0 0 4h3a2 2 0 0 0 0-4M1016 662h3a2 2 0 0 1 0 4h-1" fill="none" stroke="#888" transform="translate(-1 -2)"/>
<text x="1029" y="666" style="font:italic 11px 'Liberation Serif',serif;fill:#c8c8c8">fx</text>
<rect x="1045" y="657" width="10" height="8" fill="#e0e0e0"/><circle cx="1050" cy="661" r="2.500" fill="#4f4f4f"/>
<circle cx="1068" cy="662" r="3.800" fill="none" stroke="#ddd"/><path d="M1068 658.200a3.800 3.800 0 0 1 0 7.600z" fill="#ddd"/>
<path d="M1081 657h3l1 1.500h5v6h-9z" fill="#d6d6d6"/>
<path d="M1099 657h8v6l-2 2h-3v-3h-3z" fill="none" stroke="#d6d6d6" stroke-width="1.200"/>
<path d="M1118 658h7M1119 659v7h5v-7" fill="none" stroke="#808080" stroke-width="1.200"/>

<!-- learn -->
<rect x="1143" y="52" width="2.500" height="622" fill="#3e3e3e"/>
<rect x="1145.500" y="52" width="54.500" height="622" fill="#4f4f4f"/>
<rect x="1145.500" y="78" width="54.500" height="1" fill="#424242"/><rect x="1145.500" y="105" width="54.500" height="1" fill="#424242"/>
<circle cx="1157.500" cy="64.500" r="4.300" fill="none" stroke="#d4d4d4"/><rect x="1155.500" y="69" width="4" height="3" fill="#d4d4d4"/>
<text x="1169" y="69.500" class="w">Learn</text>
<ellipse cx="1157" cy="94.500" rx="6.500" ry="4.500" fill="#b8b8b8"/><ellipse cx="1158" cy="94.500" rx="3" ry="2.500" fill="none" stroke="#4f4f4f"/>
<text x="1169" y="96.500" class="w">Libr...</text>
<rect y="672" width="1200" height="2" fill="#3c3c3c"/>
</svg>
</body></html>
